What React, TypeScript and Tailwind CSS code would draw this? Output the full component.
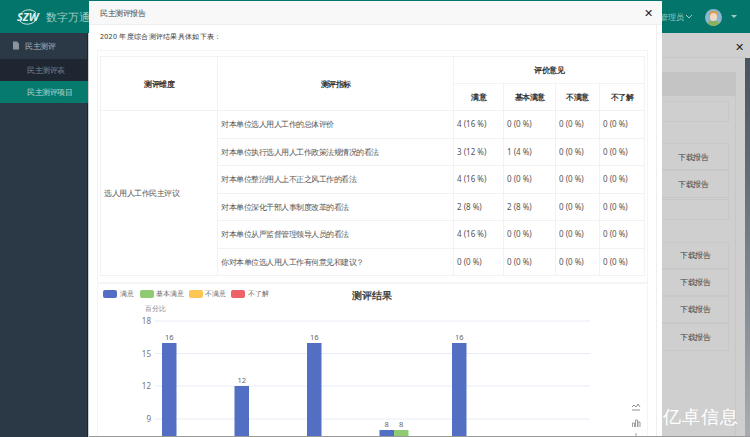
const font = "font-['Liberation_Sans','Noto_Sans_CJK_SC',sans-serif]";

const rows = [
  ["对本单位选人用人工作的总体评价", "4 (16 %)", "0 (0 %)", "0 (0 %)", "0 (0 %)"],
  ["对本单位执行选人用人工作政策法规情况的看法", "3 (12 %)", "1 (4 %)", "0 (0 %)", "0 (0 %)"],
  ["对本单位整治用人上不正之风工作的看法", "4 (16 %)", "0 (0 %)", "0 (0 %)", "0 (0 %)"],
  ["对本单位深化干部人事制度改革的看法", "2 (8 %)", "2 (8 %)", "0 (0 %)", "0 (0 %)"],
  ["对本单位从严监督管理领导人员的看法", "4 (16 %)", "0 (0 %)", "0 (0 %)", "0 (0 %)"],
  ["你对本单位选人用人工作有何意见和建议？", "0 (0 %)", "0 (0 %)", "0 (0 %)", "0 (0 %)"],
];

const legend = [
  ["满意", "bg-[#536fc4] left-[103px]", "left-[120px]"],
  ["基本满意", "bg-[#8fcb73] left-[140px]", "left-[156px]"],
  ["不满意", "bg-[#fbc653] left-[189px]", "left-[205px]"],
  ["不了解", "bg-[#ee6166] left-[231px]", "left-[248px]"],
];

const downloads = [
  [157, 678],
  [184, 678],
  [255, 680],
  [282, 680],
  [309, 680],
  [337, 680],
];
const rowBoxes = [
  [101, 21],
  [143, 27],
  [170, 28],
  [199, 21],
  [242, 27],
  [269, 27],
  [296, 27],
  [323, 28],
];

function Chart() {
  const lines = [
    [321, "18"],
    [353.5, "15"],
    [386, "12"],
    [419, "9"],
  ] as const;
  const bars = [
    [162, 343, "16", "#536fc4"],
    [234.5, 386, "12", "#536fc4"],
    [307, 343, "16", "#536fc4"],
    [379.5, 430, "8", "#536fc4"],
    [394, 430, "8", "#8fcb73"],
    [452, 343, "16", "#536fc4"],
  ] as const;
  return (
    <svg className="absolute left-0 top-0" width="750" height="436">
      {lines.map(([y, label]) => (
        <g key={label}>
          <line x1="155" x2="590" y1={y} y2={y} stroke="#e8ecf6" />
          <text x="151" y={y + 3} textAnchor="end" fontSize="8" fill="#777">{label}</text>
        </g>
      ))}
      {bars.map(([x, y, label, color], i) => (
        <g key={i}>
          <rect x={x} y={y} width="14.5" height={437 - y} fill={color} />
          <text x={x + 7.25} y={y - 3} textAnchor="middle" fontSize="7.5" fill="#666">{label}</text>
        </g>
      ))}
      {/* toolbox icons */}
      <path d="M632 407l2-2 2 2 2-3 2 3M632 410h8" fill="none" stroke="#777" strokeWidth="0.8" />
      <path d="M632.5 427v-4h2v4M635.5 427v-7h2v7M638 427v-5h2v5" fill="none" stroke="#888" strokeWidth="0.8" />
      <line x1="636" x2="636" y1="433" y2="436" stroke="#888" strokeWidth="0.8" />
    </svg>
  );
}

function Logo() {
  return (
    <div className="absolute left-[15px] top-[8px] h-[18px] w-[26px]">
      <svg className="absolute left-0 top-0" width="26" height="18" viewBox="0 0 26 18">
        <path d="M5 7C8 1 17 0 21 5" fill="none" stroke="#d5e8e4" strokeWidth="1" />
        <path d="M22 11C18 17 9 18 5 13" fill="none" stroke="#d5e8e4" strokeWidth="1" />
      </svg>
      <span className="absolute left-[2px] top-[2px] text-[11px] font-bold italic leading-[14px] text-[#e4f0ee]">SZW</span>
    </div>
  );
}

function Backdrop() {
  return (
    <>
      <div className="absolute left-0 top-0 h-[33px] w-full bg-[#04756a]" />
      <Logo />
      <div className="absolute left-[46px] top-[9px] whitespace-nowrap text-[11px] leading-[16px] text-[#9ecdc5]">数字万通云</div>
      <div className="absolute left-[660px] top-[12px] text-[8px] leading-[10px] text-[#9ecdc5]">管理员</div>
      <svg className="absolute left-[685px] top-[14px]" width="8" height="6">
        <path d="M1 1l3 3 3-3" fill="none" stroke="#9ecdc5" />
      </svg>
      <div className="absolute left-[705px] top-[9px] h-[17px] w-[17px] overflow-hidden rounded-full bg-[#8ab7cf]">
        <div className="absolute left-[4px] top-[2px] h-[8px] w-[9px] rounded-full bg-[#d99c4e]" />
        <div className="absolute left-[5px] top-[4px] h-[8px] w-[7px] rounded-full bg-[#efd9c0]" />
        <div className="absolute left-[3px] top-[12px] h-[6px] w-[11px] rounded-full bg-[#8db05e]" />
      </div>
      <div className="absolute left-[731px] top-[15px] h-0 w-0 border-x-[3px] border-t-[3px] border-x-transparent border-t-[#9ecdc5]" />

      <div className="absolute left-0 top-[33px] h-[404px] w-[88px] border-r border-[#1c2633] bg-[#2b3846]" />
      <svg className="absolute left-[12px] top-[41px]" width="8" height="9">
        <path d="M1 .5h4l2 2v6H1z" fill="#8a949e" />
      </svg>
      <div className="absolute left-[25px] top-[40px] text-[8px] leading-[11px] tracking-[-0.5px] text-[#aeb6bd]">民主测评</div>
      <div className="absolute left-0 top-[59px] flex h-[22px] w-[88px] items-center bg-[#1e2632] pl-[27px] text-[8px] tracking-[-0.5px] text-[#7d858d]">民主测评表</div>
      <div className="absolute left-0 top-[81px] flex h-[22px] w-[88px] items-center bg-[#067b6d] pl-[27px] text-[8px] tracking-[-0.5px] text-[#b5d8d2]">民主测评项目</div>

      <div className="absolute left-[662px] top-[33px] h-[404px] w-[88px] bg-[#cfcfcf]" />
      <div className="absolute left-[662px] top-[57px] h-px w-[83px] bg-[#c6c6c6]" />
      <div className="absolute left-[735px] top-[41px] text-[11px] leading-[11px] text-[#222]">✕</div>
      <div className="absolute left-[662px] top-[72px] h-[365px] w-[74px] border-r border-[#c6c6c6]" />
      <div className="absolute left-[662px] top-[72px] h-[24px] w-[74px] bg-[#c4c4c4]" />
      {rowBoxes.map(([top, height]) => (
        <div
          key={top}
          className="absolute left-[662px] w-[67px] border border-l-0 border-[#c8c8c8]"
          style={{ top, height }}
        />
      ))}
      {downloads.map(([y, x]) => (
        <div key={y} className="absolute text-[8px] leading-[10px] tracking-[-0.5px] text-[#444]" style={{ top: y - 5, left: x }}>下载报告</div>
      ))}
      <div className="absolute left-[745px] top-[58px] h-[379px] w-[5px] bg-gradient-to-b from-[#48535f] to-[#a9adb1]" />
      <div className="absolute left-[656px] top-[174px] h-[105px] w-[6px] bg-gradient-to-b from-[#4a5663] to-[#7f8a94]" />
    </>
  );
}

const th = "border border-[#f2f2f2] text-center font-bold tracking-[-0.5px] text-[#333]";
const td = "border border-[#f2f2f2] pl-[3px]";

export default function App() {
  return (
    <div className={`relative h-[437px] w-[750px] overflow-hidden bg-[#cfcfcf] text-[8px] text-[#555] ${font}`}>
      <Backdrop />

      {/* modal */}
      <div className="absolute left-[89px] top-px h-[435px] w-[573px] bg-white">
        <div className="flex h-[24px] items-center justify-between border-b border-[#eee] bg-[#f8f8f8] pl-[11px] pr-[10px] text-[8px] tracking-[-0.5px] text-[#444]">
          <span>民主测评报告</span>
          <span className="text-[11px] leading-[11px] text-[#222]">✕</span>
        </div>
        <div className="absolute left-[11px] top-[30px] text-[7px] leading-[11px] tracking-[0.3px] text-[#333]">2020 年度综合测评结果具体如下表：</div>
        <div className="absolute left-[8px] top-[49px] h-[386px] w-[551px] border-x border-t border-[#f4f4f4]" />
        <div className="absolute left-[567px] top-[24px] h-[411px] w-px bg-[#eee]" />
        <table className="absolute left-[11px] top-[55px] w-[544px] table-fixed border-collapse text-[8px] text-[#555]">
          <colgroup>
            <col className="w-[117px]" />
            <col className="w-[236px]" />
            <col className="w-[50px]" />
            <col className="w-[52px]" />
            <col className="w-[44px]" />
            <col className="w-[45px]" />
          </colgroup>
          <tbody>
            <tr className="h-[27px]">
              <td rowSpan={2} className={th}>测评维度</td>
              <td rowSpan={2} className={th}>测评指标</td>
              <td colSpan={4} className={th}>评价意见</td>
            </tr>
            <tr className="h-[27px]">
              {["满意", "基本满意", "不满意", "不了解"].map((h) => (
                <td key={h} className={th}>{h}</td>
              ))}
            </tr>
            {rows.map((r, i) => (
              <tr key={i} className="h-[27.5px]">
                {i === 0 && <td rowSpan={6} className={`${td} tracking-[-0.5px]`}>选人用人工作民主评议</td>}
                {r.map((c, j) => (
                  <td key={j} className={j === 0 ? `${td} tracking-[-0.5px]` : td}>{c}</td>
                ))}
              </tr>
            ))}
          </tbody>
        </table>
        <div className="absolute left-[8px] top-[281px] h-[2px] w-[551px] bg-[#f5f5f5]" />
        <div className="absolute left-[263px] top-[288px] text-[10px] font-bold leading-[13px] text-[#444]">测评结果</div>
      </div>
      <Chart />
      {legend.map(([name, swatch, label]) => (
        <div key={name}>
          <span className={`absolute top-[290px] h-[8px] w-[14px] rounded-[2px] ${swatch}`} />
          <span className={`absolute top-[289px] text-[7px] leading-[10px] text-[#666] ${label}`}>{name}</span>
        </div>
      ))}
      <div className="absolute left-[145px] top-[304px] text-[7px] leading-[10px] text-[#888]">百分比</div>
      <div className="absolute left-[89px] top-[436px] h-px w-[661px] bg-[#999]" />
      <div className="absolute left-[663px] top-[406px] text-[18px] leading-[20px] tracking-[1px] text-white">亿卓信息</div>
    </div>
  );
}
